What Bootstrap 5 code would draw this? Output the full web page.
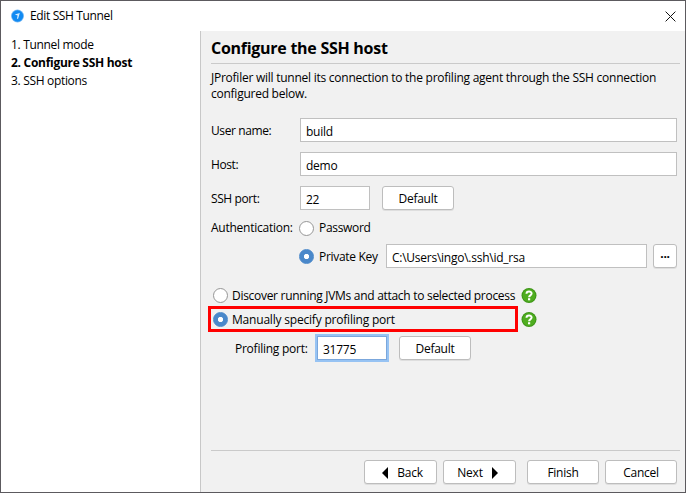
<!DOCTYPE html>
<html lang="en">
<head>
<meta charset="utf-8">
<meta name="viewport" content="width=device-width, initial-scale=1">
<title>Edit SSH Tunnel</title>
<link href="https://cdn.jsdelivr.net/npm/bootstrap@5.3.0/dist/css/bootstrap.min.css" rel="stylesheet">
<style>
html, body { height: 100%; overflow: hidden; }
body { font: 12px/18px "Segoe UI", "Open Sans", "Noto Sans", sans-serif; color: #000; letter-spacing: -.25px; }
.dialog { height: 100vh; border: 1px solid #5c5a5e; background: #fff; }
.titlebar { height: 30px; padding: 0 9px 0 9px; }
.caption { margin-left: 6px; letter-spacing: -.36px; }
.steps { width: 199px; padding: 5px 0 0 10px; letter-spacing: -.32px; }
.steps .fw-bold { letter-spacing: -.28px; }
.panel { background: #f1f1f1; border-left: 1px solid #c8c8c8; padding: 0 5px 8px 10px; }
.heading { font-size: 16px; line-height: 34px; height: 33px; font-weight: 700; border-bottom: 1px solid #cacaca; margin: 0; letter-spacing: -.27px; }
.intro { line-height: 16px; margin: 6px 0 16px; white-space: nowrap; letter-spacing: -.25px; }
.form-rows { padding-right: 3px; }
.line { display: flex; align-items: center; height: 24px; white-space: nowrap; }
.line label { padding-top: 2px; }
.cap { width: 89px; flex: none; }
label.cap { letter-spacing: -.4px; }
.form-control.field { height: 24px; min-height: 0; padding: 2px 5px 0; border: 1px solid #c0c0c0; border-radius: 0; font-size: 12px; line-height: 20px; color: #000; letter-spacing: inherit; background: #fff; }
.w-port { width: 70px; flex: none; }
.field.active-field { border-color: #7ba7dc; box-shadow: 0 0 0 2px #97c3f3; }
.btn.push { height: 24px; width: 72px; flex: none; padding: 1px 0 0; font-size: 12px; line-height: 21px; color: #000; background: #fff; border: 1px solid #bdbdbd; border-radius: 3px; letter-spacing: inherit; box-shadow: 0 1px 0 #dedede; }
.btn.push.wide { width: 73px; }
.btn.push.back { padding-left: 4px; }
.btn.push.next { padding-right: 4px; }
.back svg { margin: -2px 9px 0 0; }
.next svg { margin: -2px 0 0 9px; }
.btn.push.tiny { width: 24px; font-weight: 700; line-height: 14px; padding: 0 0 5px; }
.form-check-input.opt { width: 15px; height: 15px; margin: 0 5px 0 0; flex: none; border: 1px solid #969696; box-shadow: none; }
.form-check-input.opt:checked { background: radial-gradient(circle, #fff 0 2.2px, #4a88ca 3px); border-color: #4a88ca; }
.opt + label { letter-spacing: -.31px; }
.choice .opt + label { letter-spacing: -.29px; }
.choice .opt:checked + label { letter-spacing: -.2px; }
.choice { height: 24px; width: 309px; flex: none; padding-left: 2px; }
.choice .form-check-input.opt { margin-right: 4px; }
.outline { position: absolute; left: -3px; top: -1px; width: 310px; height: 26px; border: 3px solid #f00; }
.bottom { border-top: 1px solid #cacaca; padding: 9px 3px 0 0; }
</style>
</head>
<body>
<div class="dialog d-flex flex-column">
  <header class="titlebar d-flex align-items-center">
    <svg width="14" height="14" viewBox="0 0 14 14"><circle cx="7.5" cy="7" r="6.5" fill="#7dbcf5"/><circle cx="7.5" cy="7" r="5.7" fill="#118af2"/><path d="M4.8 5.6 9.8 4 8.2 9.6 6.9 9.9 7.6 6.6Z" fill="#d5ecff"/></svg>
    <span class="caption">Edit SSH Tunnel</span>
    <svg class="ms-auto" width="11" height="11" viewBox="0 0 11 11" fill="none" stroke="#111"><path d="M.6.6 10.4 10.4M10.4.6.6 10.4"/></svg>
  </header>
  <div class="d-flex flex-grow-1">
    <nav class="steps flex-shrink-0">
      <div>1. Tunnel mode</div>
      <div class="fw-bold">2. Configure SSH host</div>
      <div>3. SSH options</div>
    </nav>
    <main class="panel flex-grow-1 d-flex flex-column">
      <h1 class="heading">Configure the SSH host</h1>
      <p class="intro">JProfiler will tunnel its connection to the profiling agent through the SSH connection<br>configured below.</p>
      <form class="form-rows">
        <div class="line"><label class="cap">User name:</label><input class="form-control field" value="build"></div>
        <div class="line" style="margin-top:10px"><label class="cap">Host:</label><input class="form-control field" value="demo"></div>
        <div class="line" style="margin-top:10px"><label class="cap">SSH port:</label><input class="form-control field w-port" value="22"><button type="button" class="btn push" style="margin-left:12px">Default</button></div>
        <div class="line" style="margin-top:6px"><span class="cap" style="width:88px">Authentication:</span><input class="form-check-input opt" type="radio" name="auth"><label class="pt-0">Password</label></div>
        <div class="line" style="margin-top:4px;padding-left:88px"><input class="form-check-input opt" type="radio" name="auth" checked><label style="width:67px;flex:none">Private Key</label><input class="form-control field" value="C:\Users\ingo\.ssh\id_rsa"><button type="button" class="btn push tiny" style="margin-left:6px">...</button></div>
        <div class="line" style="margin-top:15px"><div class="choice d-flex align-items-center"><input class="form-check-input opt" type="radio" name="mode"><label>Discover running JVMs and attach to selected process</label></div>
          <svg width="17" height="17" viewBox="0 0 17 17"><circle cx="9" cy="8.5" r="7.5" fill="#3d9516"/><circle cx="9" cy="8.5" r="6.5" fill="#4fad20"/><path d="M6.5 6.8C6.5 3.7 11.6 3.7 11.6 6.6 11.6 8.4 9.1 8.3 9.1 10.2" fill="none" stroke="#fff" stroke-width="2"/><rect x="8" y="11.2" width="2.2" height="2.1" fill="#fff"/></svg></div>
        <div class="line position-relative"><div class="choice d-flex align-items-center"><input class="form-check-input opt" type="radio" name="mode" checked><label>Manually specify profiling port</label></div>
          <svg width="17" height="17" viewBox="0 0 17 17"><circle cx="9" cy="8.5" r="7.5" fill="#3d9516"/><circle cx="9" cy="8.5" r="6.5" fill="#4fad20"/><path d="M6.5 6.8C6.5 3.7 11.6 3.7 11.6 6.6 11.6 8.4 9.1 8.3 9.1 10.2" fill="none" stroke="#fff" stroke-width="2"/><rect x="8" y="11.2" width="2.2" height="2.1" fill="#fff"/></svg><div class="outline"></div></div>
        <div class="line" style="margin-top:5px;padding-left:24px"><label style="width:82px;flex:none">Profiling port:</label><input class="form-control field w-port active-field" value="31775"><button type="button" class="btn push" style="margin-left:12px">Default</button></div>
      </form>
      <footer class="bottom d-flex justify-content-end mt-auto">
        <button type="button" class="btn push wide back"><svg width="6" height="12" viewBox="0 0 6 12"><path d="M6 0v12L0 6Z"/></svg>Back</button>
        <button type="button" class="btn push wide next" style="margin-left:6px">Next<svg width="6" height="12" viewBox="0 0 6 12"><path d="M0 0v12L6 6Z"/></svg></button>
        <button type="button" class="btn push" style="margin-left:11px">Finish</button>
        <button type="button" class="btn push" style="margin-left:6px">Cancel</button>
      </footer>
    </main>
  </div>
</div>
<script src="https://cdn.jsdelivr.net/npm/bootstrap@5.3.0/dist/js/bootstrap.bundle.min.js"></script>
</body>
</html>
